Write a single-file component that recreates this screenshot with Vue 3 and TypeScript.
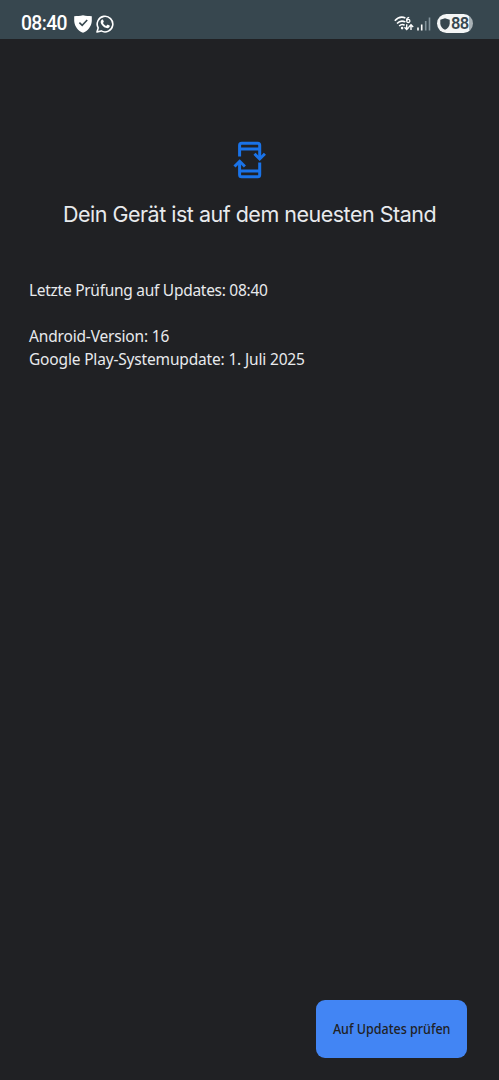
<script setup lang="ts">
interface InfoLine {
  id: string
  text: string
}

const time: string = '08:40'
const battery: number = 88
const infoLines: InfoLine[] = [
  { id: 'checked', text: `Letzte Prüfung auf Updates: ${time}` },
  { id: 'android', text: 'Android-Version: 16' },
  { id: 'play', text: 'Google Play-Systemupdate: 1. Juli 2025' },
]
</script>

<template>
  <div class="screen">
    <header class="status">
      <span class="clock">{{ time }}</span>
      <svg class="shield" width="18" height="18" viewBox="0 0 18 18">
        <path d="M9 0.2C12 .9 15 1 17.8 1.2V6C17.4 11.5 14 15.8 9 17.8C4 15.8 .6 11.5 .2 6V1.2C3 1 6 .9 9 .2Z" fill="#fff" />
        <path d="M5.4 7.6L8.2 10.4L13.2 5" fill="none" stroke="#37474f" stroke-width="1.6" />
      </svg>
      <svg class="whatsapp" width="18" height="18" viewBox="0 0 18 18">
        <path d="M1 17L2.2 12.9A7.8 7.8 0 1 1 5.2 15.9Z" fill="none" stroke="#fff" stroke-width="1.6" stroke-linejoin="round" />
        <path d="M5.8 4.7C6.2 4.4 6.8 4.4 7 4.8L7.8 6.6C7.9 7 7.3 7.6 7 8C7.7 9.4 8.8 10.3 10.2 10.9L11.2 9.8C11.4 9.6 11.7 9.6 12 9.8L13.6 10.6C14 10.9 13.7 12 13 12.6C12.2 13.3 11 13.3 9.8 12.8C7.6 12 5.8 10.2 5 8.4C4.4 7 4.6 5.6 5.8 4.7Z" fill="#fff" />
      </svg>
      <span class="spacer"></span>
      <svg class="wifi" width="20" height="16" viewBox="0 0 20 16">
        <g fill="none" stroke="#fff" stroke-width="1.6">
          <path d="M.8 4.7C3.8 1.5 8 .5 11.4 2" />
          <path d="M3 7.5C5.2 5.1 8.4 4.5 11.4 5.9" />
          <path d="M5.2 10C6.8 8.4 8.8 8.1 10.6 9.2" />
        </g>
        <circle cx="8.1" cy="12.1" r="1.3" fill="#fff" />
        <path d="M15.2 1.3C13.3 1.5 12.5 3 12.6 4.7" fill="none" stroke="#fff" stroke-width="1.3" />
        <circle cx="14.3" cy="4.9" r="1.6" fill="none" stroke="#fff" stroke-width="1.3" />
        <g fill="none" stroke="#fff" stroke-width="1.4">
          <path d="M12.7 8.3V13.4M10.5 11.3L12.7 13.5L14.9 11.3" />
          <path d="M17 13.9V8.8M14.8 11L17 8.8L19.2 11" />
        </g>
      </svg>
      <svg class="signal" width="14" height="14" viewBox="0 0 14 14">
        <path d="M1 10.5V13.5M4.7 7.5V13.5" stroke="#fff" stroke-width="1.6" />
        <path d="M8.7 4V13.5M12.5 .5V13.5" stroke="#83939b" stroke-width="1.6" />
      </svg>
      <span class="battery">
        <svg width="10" height="12" viewBox="0 0 10 12">
          <path d="M5 .3L9.7 1.7V5.4C9.6 8.4 7.7 10.6 5 11.7C2.3 10.6 .4 8.4 .3 5.4V1.7Z" fill="#37474f" />
        </svg>
        <span class="level">{{ battery }}</span>
      </span>
    </header>

    <main class="content">
      <svg class="hero" width="34" height="38" viewBox="0 0 34 38">
        <g fill="none" stroke="#1a73e8" stroke-width="3">
          <path d="M6.6 15.6V4.3Q6.6 2.3 8.6 2.3H24.7Q26.7 2.3 26.7 4.3V17" />
          <path d="M6.6 7.9H26.7M6.6 30.1H26.7" />
          <path d="M26.7 21.6V33.7Q26.7 35.7 24.7 35.7H8.6Q6.6 35.7 6.6 33.7V21" />
          <path d="M21.5 12.8L26.7 18L31.9 12.8" />
          <path d="M1.5 25.5L6.7 20.3L11.9 25.5" />
        </g>
      </svg>
      <h1><span class="title">Dein Gerät ist auf dem neuesten Stand</span></h1>
      <section class="info">
        <p v-for="line in infoLines" :key="line.id" :class="line.id"><span>{{ line.text }}</span></p>
      </section>
    </main>

    <footer class="actions">
      <button type="button"><span class="label">Auf Updates prüfen</span></button>
    </footer>
  </div>
</template>

<style>
body {
  margin: 0;
  background: #202124;
}
</style>

<style scoped>
.screen {
  display: flex;
  flex-direction: column;
  box-sizing: border-box;
  height: 1080px;
  background: #202124;
  color: #e8eaed;
  font-family: "Noto Sans", "Open Sans", sans-serif;
}
.status {
  display: flex;
  align-items: center;
  box-sizing: border-box;
  height: 39px;
  padding: 8px 26px 0 21px;
  background: #37474f;
}
.clock {
  width: 53px;
  color: #fff;
  font: 500 19.3px/30px Roboto, sans-serif;
  letter-spacing: -0.6px;
  white-space: nowrap;
}
.whatsapp {
  margin-left: 4px;
}
.spacer {
  flex: 1;
}
.signal {
  margin: 1px 6px 0 3px;
}
.battery {
  display: flex;
  align-items: center;
  box-sizing: border-box;
  width: 36px;
  height: 19px;
  padding-left: 3px;
  border-radius: 10px;
  background: linear-gradient(90deg, #f4f6f6 32px, #a9b2b6 32px);
}
.level {
  margin-left: 1px;
  color: #37474f;
  font: 600 16.5px/19px Roboto, sans-serif;
  letter-spacing: -0.8px;
}
.content {
  display: flex;
  flex: 1;
  flex-direction: column;
  align-items: center;
  padding: 102px 29px 0;
}
h1 {
  margin: 19px 0 0;
  font: 400 21.5px/32px "Google Sans", Inter, sans-serif;
  white-space: nowrap;
}
.title {
  letter-spacing: -0.5px;
}
.info {
  align-self: stretch;
  margin-top: 49px;
}
.info p {
  margin: 0;
  font-size: 15.5px;
  line-height: 23px;
  letter-spacing: -0.17px;
  white-space: nowrap;
}
.info .checked {
  letter-spacing: -0.28px;
}
.info .android {
  margin-top: 23px;
}
.actions {
  display: flex;
  justify-content: flex-end;
  padding: 0 32px 22px 0;
}
button {
  width: 151px;
  height: 58px;
  padding: 0;
  border: 0;
  border-radius: 9px;
  background: #4285f4;
  color: #202124;
  font: 500 14px/20px "Noto Sans", sans-serif;
  white-space: nowrap;
}
.label {
  display: inline-block;
  transform: scaleX(0.895);
}
</style>
